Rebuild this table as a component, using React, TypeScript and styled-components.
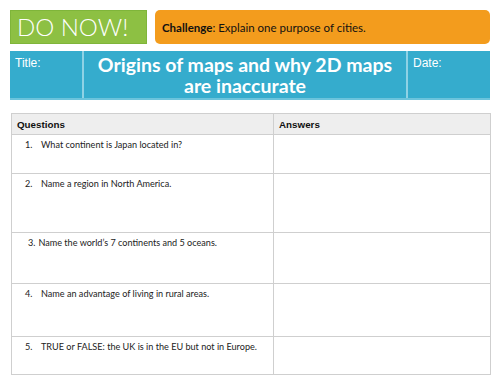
import React from "react";
import styled, { createGlobalStyle } from "styled-components";

const Global = createGlobalStyle`
  html, body { margin: 0; padding: 0; background: #fff; }
  body { width: 500px; height: 375px; overflow: hidden; font-family: Lato, "Liberation Sans", sans-serif; }
  * { box-sizing: border-box; }
`;

const Page = styled.div`
  display: flex;
  flex-direction: column;
  padding: 10px 10px 0 10px;
  width: 500px;
`;

const TopRow = styled.div`
  display: flex;
  gap: 8px;
  height: 34px;
`;

const DoNow = styled.div`
  width: 137px;
  background: #8dc043;
  border: 1px solid #7fb53a;
  color: #fff;
  font-family: Lato, sans-serif;
  font-weight: 300;
  font-size: 24px;
  line-height: 32px;
  padding-left: 6px;
`;

const Challenge = styled.div`
  flex: 1;
  background: #f39c1d;
  border-radius: 5px;
  display: flex;
  align-items: center;
  padding-left: 7px;
  font-family: Lato, sans-serif;
  font-size: 11.5px;
  color: #111;
  b { font-weight: 700; }
`;

const TitleBar = styled.div`
  margin-top: 7px;
  height: 49px;
  display: grid;
  grid-template-columns: 74px 1fr 82px;
  background: #35accd;
  border-bottom: 2px solid #6cc4dc;
  width: 480px;
`;

const Cell = styled.div<{ $divider?: boolean }>`
  color: #fff;
  border-right: ${(p) => (p.$divider ? "2px solid #8fd2e5" : "none")};
`;

const Label = styled(Cell)`
  font-family: "Liberation Sans", Arial, sans-serif;
  font-size: 12px;
  padding: 5px 0 0 5px;
`;

const Heading = styled(Cell)`
  font-family: Lato, sans-serif;
  font-weight: 700;
  font-size: 19.5px;
  line-height: 21px;
  text-align: center;
  padding-top: 3px;
`;

const Table = styled.div`
  margin-top: 13px;
  margin-left: 1px;
  width: 480px;
  display: grid;
  grid-template-columns: 262px 1fr;
  grid-template-rows: 21px 39px 59px 51px 53px 37px;
  border: 1px solid #cfcfcf;
`;

const Head = styled.div<{ $last?: boolean }>`
  background: #eeeeee;
  font-family: "Liberation Sans", Arial, sans-serif;
  font-weight: 700;
  font-size: 9.8px;
  color: #111;
  padding: 5px 0 0 5px;
  border-bottom: 1px solid #cfcfcf;
  border-right: ${(p) => (p.$last ? "none" : "1px solid #cfcfcf")};
`;

const QCell = styled.div<{ $last?: boolean; $plain?: boolean }>`
  border-right: 1px solid #cfcfcf;
  border-bottom: ${(p) => (p.$last ? "none" : "1px solid #cfcfcf")};
  font-family: Lato, sans-serif;
  font-size: 9.1px;
  color: #222;
  padding: 4px 0 0 ${(p) => (p.$plain ? "16px" : "13px")};
  display: flex;
`;

const Num = styled.span<{ $plain?: boolean }>`
  width: ${(p) => (p.$plain ? "auto" : "16px")};
  margin-right: ${(p) => (p.$plain ? "3px" : "0")};
`;

const ACell = styled.div<{ $last?: boolean }>`
  border-bottom: ${(p) => (p.$last ? "none" : "1px solid #cfcfcf")};
`;

const questions: { n: string; t: string; plain?: boolean }[] = [
  { n: "1.", t: "What continent is Japan located in?" },
  { n: "2.", t: "Name a region in North America." },
  { n: "3.", t: "Name the world’s 7 continents and 5 oceans.", plain: true },
  { n: "4.", t: "Name an advantage of living in rural areas." },
  { n: "5.", t: "TRUE or FALSE: the UK is in the EU but not in Europe." },
];

export default function App() {
  return (
    <>
      <Global />
      <Page>
        <TopRow>
          <DoNow>DO NOW!</DoNow>
          <Challenge>
            <span>
              <b>Challenge</b>: Explain one purpose of cities.
            </span>
          </Challenge>
        </TopRow>
        <TitleBar>
          <Label $divider>Title:</Label>
          <Heading $divider>
            Origins of maps and why 2D maps
            <br />
            are inaccurate
          </Heading>
          <Label>Date:</Label>
        </TitleBar>
        <Table>
          <Head>Questions</Head>
          <Head $last>Answers</Head>
          {questions.map((q, i) => (
            <React.Fragment key={q.n}>
              <QCell $last={i === questions.length - 1} $plain={q.plain}>
                <Num $plain={q.plain}>{q.n}</Num>
                <span>{q.t}</span>
              </QCell>
              <ACell $last={i === questions.length - 1} />
            </React.Fragment>
          ))}
        </Table>
      </Page>
    </>
  );
}
